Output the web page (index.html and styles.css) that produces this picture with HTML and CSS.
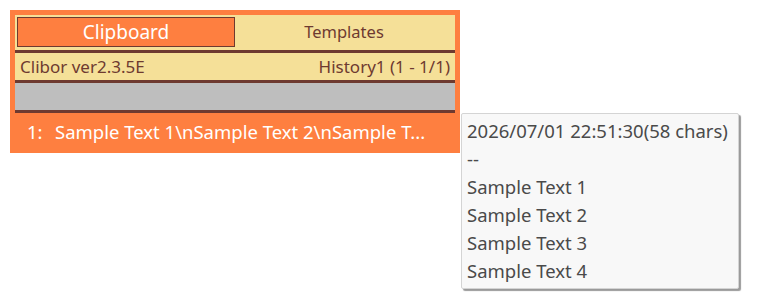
FILE: index.html
```html
<!DOCTYPE html>
<html>
<head>
    <link rel="stylesheet" href="styles.css">
</head>
<body>
    <div id="clibor">
        <div class="tabs">
            <div class="tab active">Clipboard</div>
            <div class="tab">Templates</div>
        </div>
        <div class="info">
            <span>Clibor ver2.3.5E</span>
            <span>History1 (1 - 1/1)</span>
        </div>
        <div class="search"></div>
        <div class="item">
            <span class="num">1:</span>
            <span class="text">Sample Text 1\nSample Text 2\nSample T...</span>
        </div>
    </div>

    <div id="tooltip">
        <div>2026/07/01 22:51:30(58 chars)</div>
        <div>--</div>
        <div>Sample Text 1</div>
        <div>Sample Text 2</div>
        <div>Sample Text 3</div>
        <div>Sample Text 4</div>
    </div>
</body>
</html>
```

FILE: styles.css
```css
body {
    margin: 10px;
    background-color: white;
    font-family: 'Noto Sans', sans-serif;
}
#clibor {
    width: 440px;
    padding: 5px;
    background-color: #fe7f40;
}
.tabs {
    display: flex;
    padding: 2px;
    box-sizing: border-box;
    background-color: #f5e098;
    border-bottom: 3px solid #6e3a30;
    height: 38px;
}
.tab {
    flex: 1;
    height: 30px;
    line-height: 30px;
    text-align: center;
    font-size: 16.5px;
    color: #6e3a30;
}
.tab.active {
    flex: 0 0 218px;
    box-sizing: border-box;
    background-color: #fe7f40;
    border: 1px solid #6e3a30;
    line-height: 28px;
    font-size: 19px;
    color: white;
}
.info {
    display: flex;
    justify-content: space-between;
    height: 27px;
    line-height: 27px;
    padding: 0 5px;
    background-color: #f5e098;
    border-bottom: 3px solid #6e3a30;
    font-size: 17px;
    color: #6e3a30;
}
.search {
    height: 27px;
    background-color: #bebebe;
    border-bottom: 3px solid #6e3a30;
}
.item {
    display: flex;
    height: 35px;
    line-height: 37px;
    padding-left: 12px;
    font-size: 18.5px;
    color: white;
    white-space: nowrap;
}
.num {
    width: 28px;
}
#tooltip {
    position: absolute;
    left: 461px;
    top: 113px;
    width: 266px;
    padding: 3px 5px;
    background-color: #f8f8f8;
    border: 1px solid #d4d4d4;
    border-radius: 2px;
    box-shadow: 2px 2px 1px #9a9a9a;
    font-size: 18.5px;
    line-height: 28px;
    color: #4a4a4a;
}
```
